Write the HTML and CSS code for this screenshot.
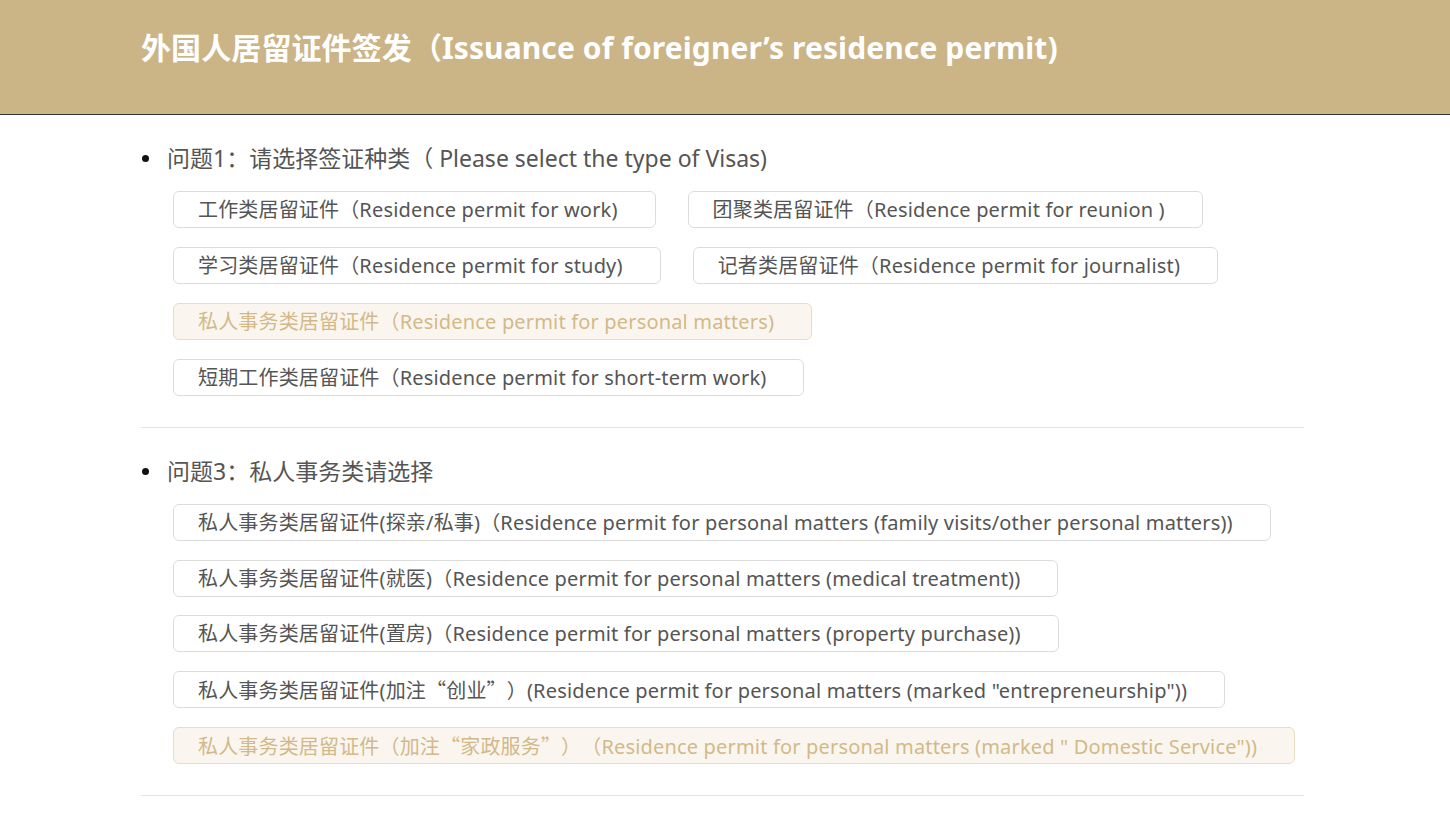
FILE: index.html
```html
<!DOCTYPE html>
<html lang="zh-CN">
<head>
<meta charset="utf-8">
<title>外国人居留证件签发</title>
<link rel="stylesheet" href="styles.css">
</head>
<body>
<header class="top">
  <h1 class="title">外国人居留证件签发（Issuance of foreigner’s residence permit)</h1>
</header>
<main class="content">
  <section class="question">
    <div class="q-title">问题1：请选择签证种类（ Please select the type of Visas)</div>
    <div class="opts">
      <div class="opt">工作类居留证件（Residence permit for work)</div>
      <div class="opt">团聚类居留证件（Residence permit for reunion )</div>
      <div class="opt">学习类居留证件（Residence permit for study)</div>
      <div class="opt">记者类居留证件（Residence permit for journalist)</div>
      <div class="opt opt-active">私人事务类居留证件（Residence permit for personal matters)</div>
      <div class="opt">短期工作类居留证件（Residence permit for short-term work)</div>
    </div>
  </section>
  <hr class="divider">
  <section class="question">
    <div class="q-title">问题3：私人事务类请选择</div>
    <div class="opts opts-tight">
      <div class="opt">私人事务类居留证件(探亲/私事)（Residence permit for personal matters (family visits/other personal matters))</div>
      <div class="opt">私人事务类居留证件(就医)（Residence permit for personal matters (medical treatment))</div>
      <div class="opt">私人事务类居留证件(置房)（Residence permit for personal matters (property purchase))</div>
      <div class="opt">私人事务类居留证件(加注<span class="cjk">“</span>创业<span class="cjk">”</span>）(Residence permit for personal matters (marked "entrepreneurship"))</div>
      <div class="opt opt-active">私人事务类居留证件（加注<span class="cjk">“</span>家政服务<span class="cjk">”</span>）（Residence permit for personal matters (marked " Domestic Service"))</div>
    </div>
  </section>
  <hr class="divider">
</main>
</body>
</html>
```

FILE: styles.css
```css
html, body {
  margin: 0;
  padding: 0;
  background: #ffffff;
}
body {
  font-family: "Noto Sans", "Noto Sans CJK SC", sans-serif;
  color: #555555;
}
.cjk {
  font-family: "Noto Sans CJK SC", sans-serif;
}
.top {
  height: 114px;
  background: #cbb486;
  border-bottom: 1px solid #333333;
  box-sizing: content-box;
  display: flex;
  align-items: flex-start;
}
.title {
  margin: 0;
  padding: 29px 0 0 141px;
  font-size: 30px;
  line-height: 38px;
  font-weight: 700;
  letter-spacing: 0.1px;
  color: #ffffff;
}
.content {
  width: 1163px;
  margin-left: 141px;
}
.question {
  padding-top: 27px;
}
.divider + .question {
  padding-top: 27px;
}
.q-title {
  display: flex;
  align-items: center;
  font-size: 23px;
  line-height: 32px;
  color: #555555;
}
.q-title::before {
  content: "";
  width: 7px;
  height: 7px;
  border-radius: 50%;
  background: #111111;
  margin: 0 18px 0 1px;
}
.opts {
  display: flex;
  flex-wrap: wrap;
  align-items: flex-start;
  column-gap: 32px;
  row-gap: 19px;
  padding: 17px 0 0 32px;
}
.opts-tight {
  row-gap: 18.7px;
}
.opt {
  height: 35px;
  line-height: 35px;
  border: 1px solid #dcdcdc;
  border-radius: 6px;
  padding: 0 37px 0 24px;
  font-size: 20px;
  letter-spacing: 0.17px;
  color: #555555;
  white-space: nowrap;
  background: #ffffff;
  text-spacing-trim: space-all;
}
.opt-active {
  background: #faf6ef;
  border-color: #e8dcc4;
  color: #d3b989;
}
.divider {
  margin: 31px 0 0 0;
  border: 0;
  border-top: 1px solid #e2e2e2;
  height: 0;
}
```
